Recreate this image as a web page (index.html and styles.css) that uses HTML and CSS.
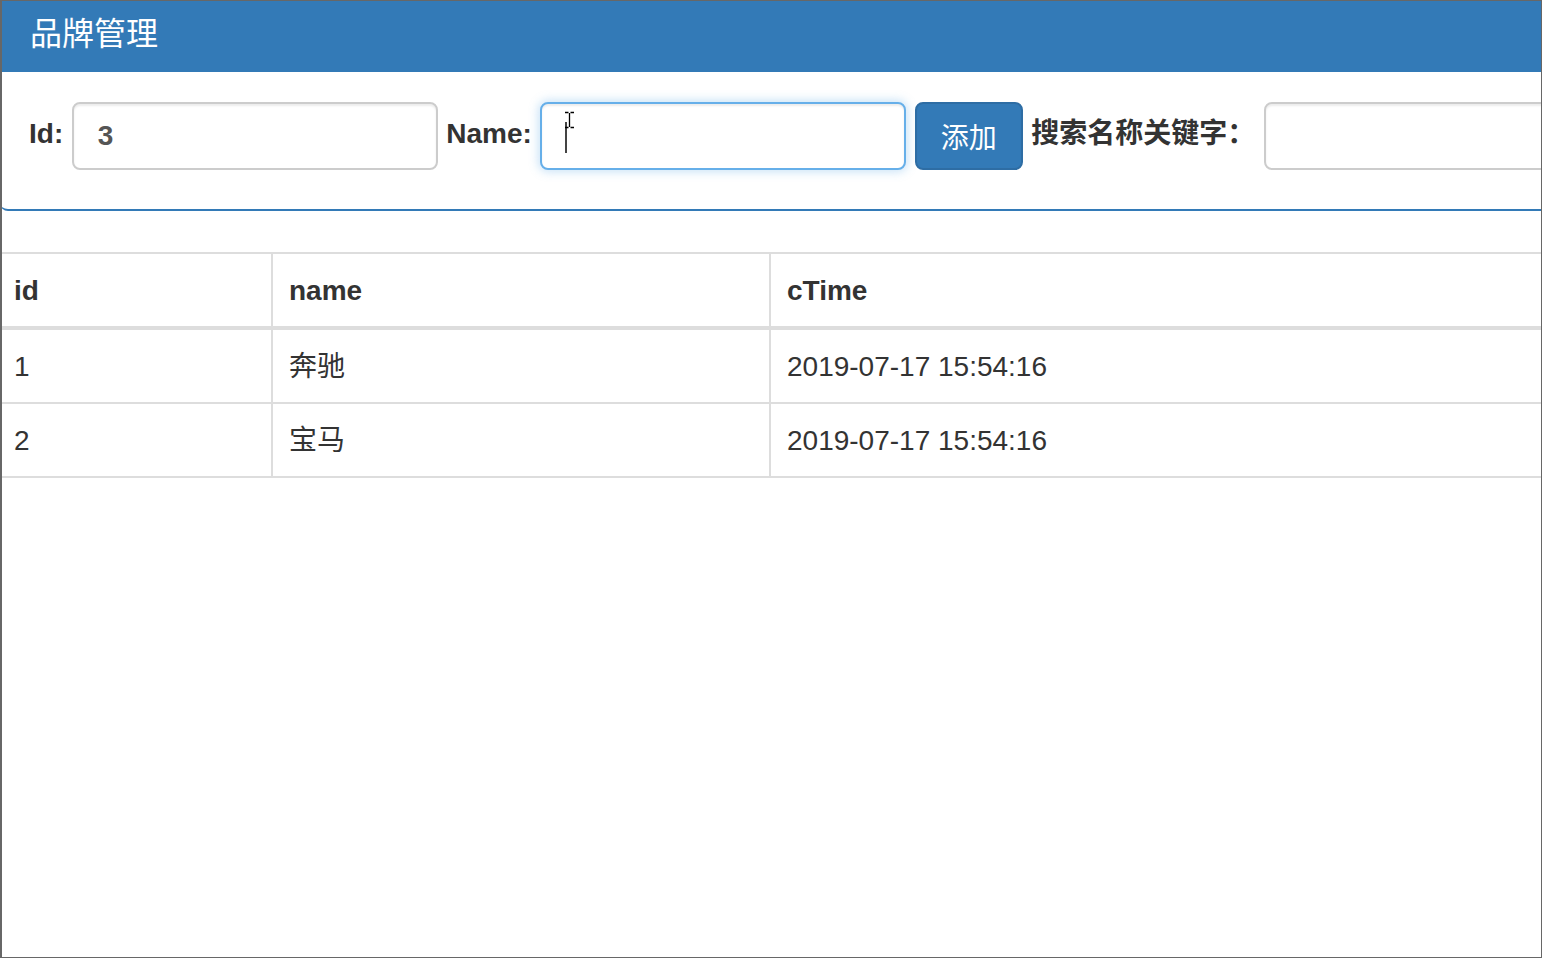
FILE: index.html
```html
<!DOCTYPE html>
<html lang="zh-CN">
<head>
<meta charset="utf-8">
<title>品牌管理</title>
<link rel="stylesheet" href="styles.css">
</head>
<body>
<div class="frame">
  <div class="panel">
    <div class="panel-heading">
      <h3 class="panel-title">品牌管理</h3>
    </div>
    <div class="panel-body">
      <div class="form-inline">
        <label class="lbl">Id:</label>
        <input class="form-control" type="text" value="3">
        <label class="lbl">Name:</label>
        <span class="focus-wrap">
          <input class="form-control is-focus" type="text" value="">
          <span class="caret"></span>
          <svg class="ibeam" width="12" height="18" viewBox="0 0 12 18">
            <path d="M1 1.5h3.5M6.5 1.5H10M5.5 2v14M1 16.5h3.5M6.5 16.5H10" stroke="#000" stroke-width="1.3" fill="none"/>
          </svg>
        </span>
        <button class="btn">添加</button>
        <label class="lbl">搜索名称关键字：</label>
        <input class="form-control" type="text" value="">
      </div>
    </div>
  </div>
  <table class="table">
    <thead>
      <tr><th class="c1">id</th><th class="c2">name</th><th>cTime</th></tr>
    </thead>
    <tbody>
      <tr><td>1</td><td>奔驰</td><td>2019-07-17 15:54:16</td></tr>
      <tr><td>2</td><td>宝马</td><td>2019-07-17 15:54:16</td></tr>
    </tbody>
  </table>
</div>
</body>
</html>
```

FILE: styles.css
```css
html, body {
  margin: 0;
  padding: 0;
  background: #fff;
}
body {
  font-family: "Liberation Sans", "Noto Sans CJK SC", sans-serif;
  color: #333;
}
.frame {
  position: relative;
  box-sizing: border-box;
  width: 1542px;
  height: 958px;
  border: 1px solid #676767;
  border-left-width: 2px;
  overflow: hidden;
  background: #fff;
}
.panel {
  width: 1800px;
  margin-left: -2px;
  margin-bottom: 41px;
}
.panel-heading {
  box-sizing: border-box;
  height: 71px;
  background: #337ab7;
  padding: 14px 0 0 30px;
}
.panel-title {
  margin: 0;
  font-size: 32px;
  line-height: 38px;
  font-weight: normal;
  color: #fff;
  font-family: "Liberation Sans", "Noto Sans CJK SC", sans-serif;
}
.panel-body {
  box-sizing: border-box;
  height: 139px;
  padding: 30px 0 0 29px;
  border-bottom: 2px solid #337ab7;
  border-bottom-left-radius: 8px;
}
.form-inline {
  display: flex;
  align-items: center;
  gap: 8.5px;
}
.lbl {
  font-size: 28px;
  font-weight: bold;
  line-height: 40px;
  margin-bottom: 4px;
  white-space: nowrap;
}
.form-control {
  box-sizing: border-box;
  width: 366px;
  height: 68px;
  margin: 0;
  padding: 0 24px;
  font-family: "Liberation Sans", "Noto Sans CJK SC", sans-serif;
  font-size: 28px;
  font-weight: bold;
  color: #555;
  background: #fff;
  border: 2px solid #ccc;
  border-radius: 8px;
  box-shadow: inset 0 2px 2px rgba(0, 0, 0, .075);
  outline: none;
  flex: none;
}
.form-control.is-focus {
  border-color: #66afe9;
  box-shadow: inset 0 2px 2px rgba(0, 0, 0, .075), 0 0 10px 2px rgba(102, 175, 233, .35);
}
.focus-wrap {
  position: relative;
  display: block;
  flex: none;
  height: 68px;
}
.caret {
  position: absolute;
  left: 25px;
  top: 20px;
  width: 2px;
  height: 31px;
  background: #444;
}
.ibeam {
  position: absolute;
  left: 24px;
  top: 9px;
}
.btn {
  box-sizing: border-box;
  height: 68px;
  margin: 0;
  padding: 0 24px;
  font-family: "Liberation Sans", "Noto Sans CJK SC", sans-serif;
  font-size: 28px;
  color: #fff;
  background: #337ab7;
  border: 2px solid #2e6da4;
  border-radius: 8px;
  flex: none;
}
.table {
  width: 1800px;
  margin-left: -4px;
  border-collapse: separate;
  border-spacing: 0;
  border-top: 2px solid #ddd;
  font-size: 28px;
}
.table th,
.table td {
  box-sizing: border-box;
  padding: 17px 16px 15px;
  line-height: 40px;
  text-align: left;
  vertical-align: top;
  border-right: 2px solid #ddd;
  border-bottom: 2px solid #ddd;
  white-space: nowrap;
}
.table th {
  font-weight: bold;
  border-bottom-width: 4px;
}
.table .c1 {
  width: 275px;
}
.table .c2 {
  width: 498px;
}
```
